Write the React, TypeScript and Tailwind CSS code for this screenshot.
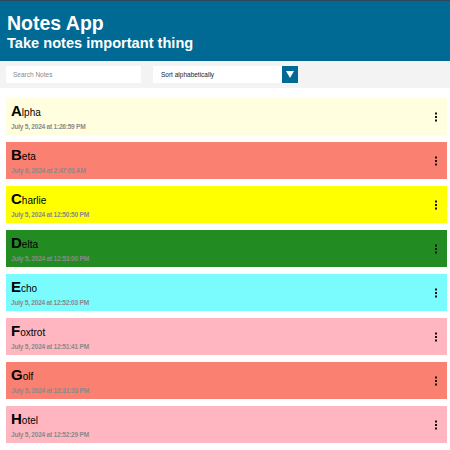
import { useState } from "react";

type Note = { title: string; date: string; color: string };

const notes: Note[] = [
  { title: "Alpha", date: "July 5, 2024 at 1:26:59 PM", color: "bg-[#ffffe0]" },
  { title: "Beta", date: "July 6, 2024 at 2:47:03 AM", color: "bg-[#fa8072]" },
  { title: "Charlie", date: "July 5, 2024 at 12:50:50 PM", color: "bg-[#ffff00]" },
  { title: "Delta", date: "July 5, 2024 at 12:53:00 PM", color: "bg-[#228b22]" },
  { title: "Echo", date: "July 5, 2024 at 12:52:03 PM", color: "bg-[#7afcff]" },
  { title: "Foxtrot", date: "July 5, 2024 at 12:51:41 PM", color: "bg-[#ffb6c1]" },
  { title: "Golf", date: "July 5, 2024 at 12:31:33 PM", color: "bg-[#fa8072]" },
  { title: "Hotel", date: "July 5, 2024 at 12:52:29 PM", color: "bg-[#ffb6c1]" },
];

function Kebab() {
  return (
    <svg width="4" height="10" viewBox="0 0 4 10" className="shrink-0">
      <rect x="1" y="0.5" width="2" height="2" fill="#111" />
      <rect x="1" y="4" width="2" height="2" fill="#111" />
      <rect x="1" y="7.5" width="2" height="2" fill="#111" />
    </svg>
  );
}

function NoteCard({ note }: { note: Note }) {
  return (
    <div className={`${note.color} h-[37px] flex items-center justify-between pl-[5px] pr-[9px]`}>
      <div className="flex flex-col">
        <div className="leading-none text-black">
          <span className="text-[15px] font-bold">{note.title[0]}</span>
          <span className="text-[10px]">{note.title.slice(1)}</span>
        </div>
        <div className="text-[6.6px] tracking-[-0.25px] font-bold text-[#8a8a8a] mt-[5px] leading-none">{note.date}</div>
      </div>
      <Kebab />
    </div>
  );
}

export default function App() {
  const [query, setQuery] = useState("");
  const shown = notes.filter((n) => n.title.toLowerCase().includes(query.toLowerCase()));
  return (
    <div className="w-[450px] h-[450px] overflow-hidden bg-white" style={{ fontFamily: '"Liberation Sans", Arial, sans-serif' }}>
      <header className="bg-[#006994] h-[61px] border-t border-[#2c4a5c] px-[7px] pt-[11px] text-white font-bold">
        <h1 className="text-[19.5px] leading-[22px]">Notes App</h1>
        <h2 className="text-[14.6px] leading-[17px] mt-[1px]">Take notes important thing</h2>
      </header>
      <div className="bg-[#f3f3f3] h-[27px] flex items-center px-[6px]">
        <input
          value={query}
          onChange={(e) => setQuery(e.target.value)}
          placeholder="Search Notes"
          className="bg-white w-[135px] h-[17px] px-[7px] text-[6.5px] outline-none placeholder-[#888]"
        />
        <div className="ml-[12px] flex h-[17px]">
          <div className="bg-white w-[129px] px-[8px] flex items-center text-[6.5px] text-[#222]">Sort alphabetically</div>
          <div className="bg-[#006994] w-[16px] flex items-center justify-center">
            <svg width="8" height="7" viewBox="0 0 8 7">
              <path d="M0 0 H8 L4 7 Z" fill="#fff" />
            </svg>
          </div>
        </div>
      </div>
      <div className="pl-[6px] pr-[3px] pt-[10px] flex flex-col gap-[7px]">
        {shown.map((n) => (
          <NoteCard key={n.title} note={n} />
        ))}
      </div>
    </div>
  );
}
